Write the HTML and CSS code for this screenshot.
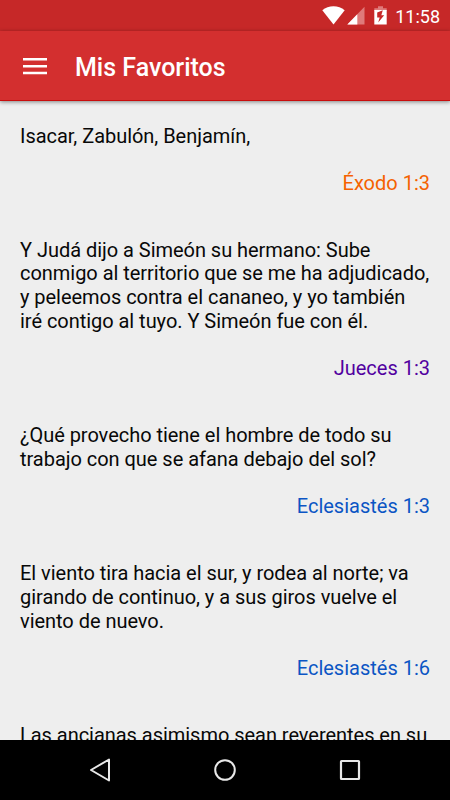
FILE: index.html
```html
<!DOCTYPE html>
<html lang="es">
<head>
<meta charset="utf-8">
<title>Mis Favoritos</title>
<link rel="stylesheet" href="styles.css">
</head>
<body>
<div class="screen">
  <div class="status">
    <svg class="wifi" width="23" height="19" viewBox="0 0 23 19"><path d="M.3 4.300C3.500 1.500 7.300.3 11.500.3s8 1.200 11.200 4L11.500 18.500z" fill="#fff"/></svg>
    <svg class="signal" width="18" height="19" viewBox="0 0 18 19"><path d="M17.500.8v17.700H.3z" fill="#df7a7a"/><path d="M10.300 8.300v10.200H.3z" fill="#fff"/></svg>
    <svg class="battery" width="13" height="19" viewBox="0 0 13 19"><path d="M.3 2.300H4V.3h5v2h3.700V5H.3z" fill="#df7a7a"/><path d="M.3 4h12.400v14.500H.3z" fill="#fff"/><path d="M8.800 4.300L3.200 6.500v5h2.500l-1.500 5 6-7.200H7.300z" fill="#c62828"/></svg>
    <span class="clock">11:58</span>
  </div>
  <header class="bar">
    <svg class="menu" width="24" height="18" viewBox="0 0 24 18"><path d="M0 2.300h24M0 9.300h24M0 16h24" stroke="#fff" stroke-width="2.400"/></svg>
    <h1>Mis Favoritos</h1>
  </header>
  <main class="list">
    <article><p>Isacar, Zabulón, Benjamín,</p><a class="orange">Éxodo 1:3</a></article>
    <article><p>Y Judá dijo a Simeón su hermano: Sube<br>conmigo al territorio que se me ha adjudicado,<br>y peleemos contra el cananeo, y yo también<br>iré contigo al tuyo. Y Simeón fue con él.</p><a class="purple">Jueces 1:3</a></article>
    <article><p>¿Qué provecho tiene el hombre de todo su<br>trabajo con que se afana debajo del sol?</p><a class="blue">Eclesiastés 1:3</a></article>
    <article><p>El viento tira hacia el sur, y rodea al norte; va<br>girando de continuo, y a sus giros vuelve el<br>viento de nuevo.</p><a class="blue">Eclesiastés 1:6</a></article>
    <article><p>Las ancianas asimismo sean reverentes en su</p></article>
  </main>
  <nav class="nav">
    <svg width="24" height="26" viewBox="0 0 24 26"><path d="M21 2.500v21L3 13z" fill="none" stroke="#e8e8e8" stroke-width="2" stroke-linejoin="round"/></svg>
    <svg width="24" height="24" viewBox="0 0 24 24"><circle cx="12" cy="12" r="9.800" fill="none" stroke="#e8e8e8" stroke-width="2"/></svg>
    <svg width="24" height="24" viewBox="0 0 24 24"><rect x="3" y="3" width="18" height="18" rx=".5" fill="none" stroke="#e8e8e8" stroke-width="2.200"/></svg>
  </nav>
</div>
</body>
</html>
```

FILE: styles.css
```css
body { margin: 0; font-family: Roboto, sans-serif; }
.screen { width: 450px; height: 800px; display: flex; flex-direction: column; overflow: hidden; background: #eee; }
.status { flex: none; height: 31px; background: #c62828; display: flex; align-items: center; justify-content: flex-end; padding-right: 10px; box-sizing: border-box; color: #fff; }
.signal { margin-left: 2px; }
.battery { margin-left: 9px; }
.clock { margin-left: 8px; font-size: 18px; line-height: 31px; font-weight: 400; padding-top: 1px; }
.bar { flex: none; height: 70px; box-sizing: border-box; border-bottom: 1px solid #c90d0d; background: #d32f2f; display: flex; align-items: center; padding-left: 23px; color: #fff; box-shadow: 0 1px 4px rgba(0,0,0,.45); }
.bar h1 { margin: 4px 0 0 28px; font-size: 25px; font-weight: 500; }
.list { flex: 1; min-height: 0; overflow: hidden; padding: 23.600px 20px 0; color: #080808; font-size: 20px; line-height: 23.800px; }
article { margin-bottom: 43px; }
p { margin: 0; white-space: nowrap; letter-spacing: -0.035px; }
article a { display: block; text-align: right; margin-top: 23.500px; }
.orange { color: #f56200; }
.purple { color: #5200a0; }
.blue { color: #0b55c4; }
.nav { flex: none; height: 60px; background: #000; display: flex; align-items: center; justify-content: center; gap: 101px; }
```
